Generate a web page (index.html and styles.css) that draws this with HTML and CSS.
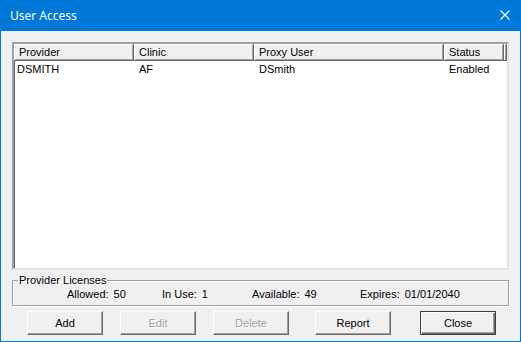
FILE: index.html
```html
<!DOCTYPE html>
<html lang="en">
<head>
    <meta charset="UTF-8">
    <meta name="viewport" content="width=device-width, initial-scale=1.0">
    <title>User Access</title>
    <link rel="stylesheet" href="styles.css">
</head>
<body>
    <div class="window">
        <div class="titlebar">
            <span class="title">User Access</span>
            <svg class="close-x" width="10" height="10" viewBox="0 0 10 10">
                <path d="M0.5 0.5 L9.5 9.5 M9.5 0.5 L0.5 9.5" stroke="#fff" stroke-width="1.1" fill="none"/>
            </svg>
        </div>
        <div class="client">
            <div class="listview">
                <div class="lv-header">
                    <div class="hcell col-provider">Provider</div>
                    <div class="hcell col-clinic">Clinic</div>
                    <div class="hcell col-proxy">Proxy User</div>
                    <div class="hcell col-status">Status</div>
                    <div class="hcell col-filler"></div>
                </div>
                <div class="lv-row">
                    <div class="cell col-provider first">DSMITH</div>
                    <div class="cell col-clinic">AF</div>
                    <div class="cell col-proxy">DSmith</div>
                    <div class="cell col-status">Enabled</div>
                </div>
            </div>

            <fieldset class="licenses">
                <legend>Provider Licenses</legend>
                <div class="stats">
                    <div class="stat stat-allowed"><span>Allowed:</span><span>50</span></div>
                    <div class="stat stat-inuse"><span>In Use:</span><span>1</span></div>
                    <div class="stat stat-available"><span>Available:</span><span>49</span></div>
                    <div class="stat stat-expires"><span>Expires:</span><span>01/01/2040</span></div>
                </div>
            </fieldset>

            <div class="buttons">
                <button class="btn">Add</button>
                <button class="btn" disabled>Edit</button>
                <button class="btn" disabled>Delete</button>
                <button class="btn btn-report">Report</button>
                <button class="btn btn-close default">Close</button>
            </div>
        </div>
    </div>
</body>
</html>
```

FILE: styles.css
```css
body {
    margin: 0;
    font-family: "Liberation Sans", Arial, sans-serif;
    font-size: 11px;
    color: #000;
}
.window {
    width: 521px;
    height: 342px;
    box-sizing: border-box;
    border: 1px solid #0078d7;
    border-top: none;
    background-color: #f0f0f0;
    display: flex;
    flex-direction: column;
}
.titlebar {
    height: 31px;
    background-color: #0078d7;
    display: flex;
    align-items: center;
    justify-content: space-between;
    padding: 0 10px 0 9px;
    flex-shrink: 0;
}
.title {
    color: #fff;
    font-family: "Noto Sans", sans-serif;
    font-size: 12px;
    padding-bottom: 1px;
}
.close-x {
    display: block;
    margin-bottom: 1px;
}
.client {
    padding: 11px 11px 0 11px;
}
.listview {
    width: 497px;
    height: 228px;
    box-sizing: border-box;
    background-color: #fff;
    border-style: solid;
    border-width: 2px;
    border-color: #a0a0a0 #e3e3e3 #e3e3e3 #a0a0a0;
    box-shadow: inset 1px 1px 0 #696969;
}
.lv-header {
    display: flex;
    height: 17px;
}
.hcell {
    box-sizing: border-box;
    height: 17px;
    line-height: 16px;
    padding-left: 5px;
    background-color: #f0f0f0;
    border-right: 1px solid #696969;
    border-bottom: 1px solid #696969;
    box-shadow: inset 1px 1px 0 #fff, inset -1px -1px 0 #a0a0a0;
    white-space: nowrap;
}
.col-provider { width: 120px; }
.col-clinic { width: 120px; }
.col-proxy { width: 190px; }
.col-status { width: 60px; }
.col-filler { width: 3px; padding: 0; }
.lv-row {
    display: flex;
    height: 17px;
    line-height: 17px;
}
.cell {
    box-sizing: border-box;
    padding-left: 5px;
    white-space: nowrap;
}
.cell.first {
    padding-left: 3px;
}
.licenses {
    margin: 4px 0 0 0;
    padding: 1px 0 0 0;
    width: 497px;
    height: 32px;
    box-sizing: border-box;
    border: 1px solid #a0a0a0;
    box-shadow: 1px 1px 0 #fff, inset 1px 1px 0 #fff;
}
.licenses legend {
    padding: 0 1px;
    margin-left: 5px;
    line-height: 13px;
}
.stats {
    display: flex;
    padding-left: 54px;
}
.stat {
    display: flex;
    gap: 5px;
}
.stat-allowed { width: 95px; }
.stat-inuse { width: 90px; }
.stat-available { width: 108px; }
.buttons {
    display: flex;
    padding: 5px 0 0 15px;
}
.btn {
    width: 76px;
    height: 24px;
    margin: 0;
    padding: 0;
    font-family: "Liberation Sans", Arial, sans-serif;
    font-size: 11px;
    color: #000;
    background-color: #f0f0f0;
    border-style: solid;
    border-width: 1px;
    border-color: #fff #696969 #696969 #fff;
    box-shadow: inset -1px -1px 0 #a0a0a0;
}
.btn + .btn {
    margin-left: 17px;
}
.btn:disabled {
    color: #a0a0a0;
    text-shadow: 1px 1px 0 #fff;
}
.btn.btn-report {
    margin-left: 26px;
}
.btn.btn-close {
    margin-left: 29px;
}
.btn.default {
    border-color: #404040;
    box-shadow: inset 1px 1px 0 #fff, inset -1px -1px 0 #696969, inset -2px -2px 0 #a0a0a0;
}
```
